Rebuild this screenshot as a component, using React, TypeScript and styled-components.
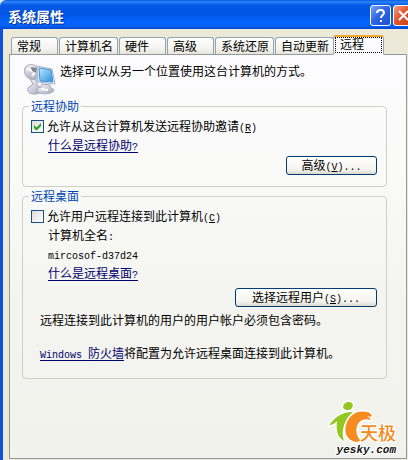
import React, { useState } from "react";
import styled, { createGlobalStyle } from "styled-components";

const GlobalStyle = createGlobalStyle`
  *, *::before, *::after { box-sizing: border-box; }
  body {
    margin: 0;
    overflow-x: hidden;
    color: #000;
    font: 12px/16px "Noto Sans CJK SC", sans-serif;
  }
`;

const Window = styled.div`
  display: flex;
  flex-direction: column;
  min-height: 100vh;
  overflow: hidden;
  background: #ece9d8;
`;

const TitleBar = styled.header`
  display: flex;
  align-items: center;
  gap: 2px;
  height: 29px;
  padding: 2px 0 0 8px;
  border-top-left-radius: 6px;
  background: linear-gradient(#0a5be0 0, #2a86fa 2px, #0659e6 5px, #0054e3 14px, #0461f8 20px, #0465fc 25px, #0048d0 29px);
`;

const Title = styled.h1`
  flex: 1;
  margin: 0;
  color: #fff;
  font-size: 14px;
  line-height: 20px;
  font-weight: 700;
  text-shadow: 1px 1px #0a2f8a;
`;

const CaptionButton = styled.button<{ $close?: boolean }>`
  flex: none;
  display: grid;
  place-items: center;
  width: 21px;
  height: 21px;
  padding: 0;
  border: 1px solid #fff;
  border-radius: 3px;
  margin-right: ${(p) => (p.$close ? "-6px" : "0")};
  background: ${(p) =>
    p.$close
      ? "linear-gradient(135deg, #f0a088, #e2552c 45%, #c63c12)"
      : "linear-gradient(135deg, #7ba4f8, #2f66e4 45%, #1b4fd2)"};
`;

const Body = styled.main`
  flex: 1;
  display: flex;
  flex-direction: column;
  padding: 6px 1px 1px 6px;
  border-left: 3px solid #0a50dc;
  background: #ece9d8;
`;

const TabList = styled.div`
  display: flex;
  align-items: flex-end;
  gap: 1px;
  height: 20px;
  padding-left: 2px;
  margin-bottom: -1px;
`;

const Tab = styled.button<{ $active?: boolean; $wide?: boolean }>`
  position: relative;
  z-index: ${(p) => (p.$active ? 1 : 0)};
  flex: none;
  width: ${(p) => (p.$active ? "51px" : p.$wide ? "59px" : "47px")};
  height: ${(p) => (p.$active ? "20px" : "18px")};
  padding: ${(p) => (p.$active ? "0 0 4px 6px" : "0 0 0 5px")};
  margin-left: ${(p) => (p.$active ? "-2px" : "0")};
  border: 1px solid #91a7b4;
  border-top: ${(p) => (p.$active ? "2px solid #f0a72c" : "1px solid #91a7b4")};
  border-bottom-color: ${(p) => (p.$active ? "#fcfcfe" : "#919b9c")};
  border-radius: 3px 3px 0 0;
  background: ${(p) => (p.$active ? "#fcfcfe" : "linear-gradient(#fff, #f3f2eb 70%, #e6e4da)")};
  color: #000;
  font: inherit;
  line-height: ${(p) => (p.$active ? "12px" : "16px")};
  text-align: left;
  white-space: nowrap;
  outline: ${(p) => (p.$active ? "1px dotted #000" : "none")};
  outline-offset: -3px;
`;

const Panel = styled.section`
  position: relative;
  flex: 1;
  padding: 8px 19px 0 12px;
  border: 1px solid #919b9c;
  background: linear-gradient(#fcfcfe, #f9f9f8 130px, #f4f4f0 240px, #f2f2ed);
`;

const Intro = styled.div`
  display: flex;
  align-items: flex-start;
  gap: 4px;
  height: 35px;
  padding-left: 2px;
`;

const IntroText = styled.p`
  margin: 0;
`;

const Group = styled.fieldset<{ $tall?: boolean }>`
  min-width: 0;
  margin: ${(p) => (p.$tall ? "1px" : "0")} 0 0;
  padding: 4px 9px ${(p) => (p.$tall ? "17px" : "11px")} 8px;
  border: 1px solid #d0d0c6;
  border-radius: 4px;
`;

const GroupTitle = styled.legend`
  padding: 0 2px;
  margin-left: -2px;
  color: #0046b5;
  line-height: 16px;
`;

const CheckRow = styled.label`
  display: flex;
  align-items: center;
  gap: 3px;
  height: 16px;
  white-space: nowrap;
`;

const CheckBox = styled.input`
  flex: none;
  appearance: none;
  width: 13px;
  height: 13px;
  margin: 0;
  border: 1px solid #1c5180;
  background: linear-gradient(135deg, #dcdcd7, #fff);
  &:checked {
    background:
      url("data:image/svg+xml,%3Csvg xmlns='http://www.w3.org/2000/svg' viewBox='0 0 11 11'%3E%3Cpath d='M2 4v3l2.5 2.5L9 5V2L4.500 6.500z' fill='%2321a121'/%3E%3C/svg%3E"),
      linear-gradient(135deg, #dcdcd7, #fff);
  }
`;

const Indented = styled.div`
  display: flex;
  flex-direction: column;
  align-items: flex-start;
  gap: 3px;
  padding: 3px 0 0 17px;
`;

const Link = styled.a`
  color: #00006e;
  text-decoration: underline;
  text-underline-offset: 2px;
`;

const Mono = styled.span`
  font-family: "Liberation Mono", monospace;
  font-size: 10px;
  line-height: 10px;
`;

const ButtonRow = styled.div<{ $loose?: boolean }>`
  display: flex;
  justify-content: flex-end;
  padding-top: ${(p) => (p.$loose ? "7px" : "3px")};
`;

const PushButton = styled.button<{ $wide?: boolean }>`
  width: ${(p) => (p.$wide ? "142px" : "91px")};
  height: 19px;
  padding: 0 0 2px;
  border: 1px solid #003c74;
  border-radius: 3px;
  background: linear-gradient(#fff, #f4f3ee 75%, #dcd8cc);
  color: #000;
  font: inherit;
  line-height: 15px;
`;

const Note = styled.p<{ $spaced?: boolean }>`
  margin: ${(p) => (p.$spaced ? "17px" : "5px")} 0 0 9px;
  white-space: nowrap;
`;

const Watermark = styled.div`
  position: absolute;
  right: 10px;
  bottom: 1px;
  display: flex;
  flex-direction: column;
  align-items: flex-end;
`;

const Brand = styled.div`
  display: flex;
  align-items: flex-end;
  height: 42px;
`;

const halo = `
  text-shadow: 1px 0 #fff, -1px 0 #fff, 0 1px #fff, 0 -1px #fff, 1px 1px #fff, -1px -1px #fff, 1px -1px #fff, -1px 1px #fff;
`;

const BrandName = styled.span`
  margin-left: -11px;
  color: #f58a1c;
  font-size: 18px;
  line-height: 22px;
  font-weight: 500;
  ${halo}
`;

const BrandUrl = styled.span`
  color: #111;
  font: italic bold 11px/14px "Liberation Mono", monospace;
  ${halo}
`;

const ComputerIcon = () => (
  <svg width="32" height="32" viewBox="0 -1 32 32" aria-hidden="true">
    <defs>
      <linearGradient id="screen" x1="0" y1="0" x2="1" y2="1">
        <stop offset="0" stopColor="#b4ecfd" />
        <stop offset="1" stopColor="#2f8fe0" />
      </linearGradient>
      <linearGradient id="metal" x1="0" y1="0" x2="1" y2="1">
        <stop offset="0" stopColor="#fdfdfe" />
        <stop offset="1" stopColor="#a3a3bd" />
      </linearGradient>
    </defs>
    <path d="M6 15l7 1v5l4 3c2 4-2 6-7 6-5 0-7-3-6-6l5-4z" fill="url(#metal)" stroke="#a2a2b8" />
    <ellipse cx="8" cy="8" rx="8" ry="7" transform="rotate(38 8 8)" fill="url(#metal)" stroke="#b2b2ba" />
    <path d="M3 5l8 3-3 4" fill="none" stroke="#fff" strokeWidth="2" />
    <path d="M7 3l6 1-1 5-4-2z" fill="#85868f" />
    <path d="M18 20l8 1 1 3c4 1 4 4-1 5-6 2-13 0-13-3 0-2 2-3 4-3z" fill="url(#metal)" stroke="#a6a6c0" />
    <path d="M13 2l15 3 3 15-17-2z" fill="#e9f1fa" stroke="#a3b4ca" />
    <path d="M15 4l12 2 2 12-13-1z" fill="url(#screen)" stroke="#4a8fd0" />
    <path d="M17 25l7 1" stroke="#fff" strokeWidth="2" />
  </svg>
);

const BrandMark = () => (
  <svg width="42" height="42" viewBox="0 0 42 42" overflow="visible" aria-hidden="true">
    <g stroke="#fff" strokeWidth="3" strokeLinejoin="round" paintOrder="stroke">
      <ellipse cx="19" cy="5" rx="5" ry="4" transform="rotate(-20 19 5)" fill="#92c621" />
      <path d="M24 11C12 11 7 16 0 24c4 0 6-2 8-4-1 9 0 16 7 20-3-10-1-18 9-29z" fill="#92c621" />
      <path d="M42 19c-1-2-2-3-4-3 2-1 4 0 5-1-1-2-3-4-5-4-8-2-15 1-19 8-5 9-3 20 8 22l5-1c-5-5-6-12-3-17 2-4 7-6 13-4z" fill="#f68b1f" />
    </g>
  </svg>
);

const tabs = ["常规", "计算机名", "硬件", "高级", "系统还原", "自动更新", "远程"];

export default function App() {
  const [assist, setAssist] = useState(true);
  const [desktop, setDesktop] = useState(false);

  return (
    <>
      <GlobalStyle />
      <Window>
        <TitleBar>
          <Title>系统属性</Title>
          <CaptionButton aria-label="帮助">
            <svg width="15" height="15" viewBox="0 0 15 15" aria-hidden="true">
              <path d="M4 5c0-4 7-4 7 0 0 2-3 2-3 5M8 12v2" fill="none" stroke="#fff" strokeWidth="2" />
            </svg>
          </CaptionButton>
          <CaptionButton $close aria-label="关闭">
            <svg width="15" height="15" viewBox="0 0 15 15" aria-hidden="true">
              <path d="M3 3l9 9M12 3L3 12" stroke="#fff" strokeWidth="2" />
            </svg>
          </CaptionButton>
        </TitleBar>
        <Body>
          <TabList role="tablist">
            {tabs.map((name) => (
              <Tab
                key={name}
                role="tab"
                aria-selected={name === "远程"}
                $active={name === "远程"}
                $wide={name.length > 2}
              >
                {name}
              </Tab>
            ))}
          </TabList>
          <Panel role="tabpanel">
            <Intro>
              <ComputerIcon />
              <IntroText>选择可以从另一个位置使用这台计算机的方式。</IntroText>
            </Intro>

            <Group>
              <GroupTitle>远程协助</GroupTitle>
              <CheckRow>
                <CheckBox type="checkbox" checked={assist} onChange={(e) => setAssist(e.target.checked)} />
                <span>
                  允许从这台计算机发送远程协助邀请<Mono>(<u>R</u>)</Mono>
                </span>
              </CheckRow>
              <Indented>
                <Link href="#assist">什么是远程协助<Mono>?</Mono></Link>
              </Indented>
              <ButtonRow>
                <PushButton>高级<Mono>(<u>V</u>)...</Mono></PushButton>
              </ButtonRow>
            </Group>

            <Group $tall>
              <GroupTitle>远程桌面</GroupTitle>
              <CheckRow>
                <CheckBox type="checkbox" checked={desktop} onChange={(e) => setDesktop(e.target.checked)} />
                <span>
                  允许用户远程连接到此计算机<Mono>(<u>C</u>)</Mono>
                </span>
              </CheckRow>
              <Indented>
                <span>计算机全名<Mono>:</Mono></span>
                <span><Mono>mircosof-d37d24</Mono></span>
                <Link href="#desktop">什么是远程桌面<Mono>?</Mono></Link>
              </Indented>
              <ButtonRow $loose>
                <PushButton $wide>选择远程用户<Mono>(<u>S</u>)...</Mono></PushButton>
              </ButtonRow>
              <Note>远程连接到此计算机的用户的用户帐户必须包含密码。</Note>
              <Note $spaced>
                <Link href="#firewall"><Mono>Windows </Mono>防火墙</Link>将配置为允许远程桌面连接到此计算机。
              </Note>
            </Group>

            <Watermark>
              <Brand>
                <BrandMark />
                <BrandName>天极</BrandName>
              </Brand>
              <BrandUrl>yesky.com</BrandUrl>
            </Watermark>
          </Panel>
        </Body>
      </Window>
    </>
  );
}
